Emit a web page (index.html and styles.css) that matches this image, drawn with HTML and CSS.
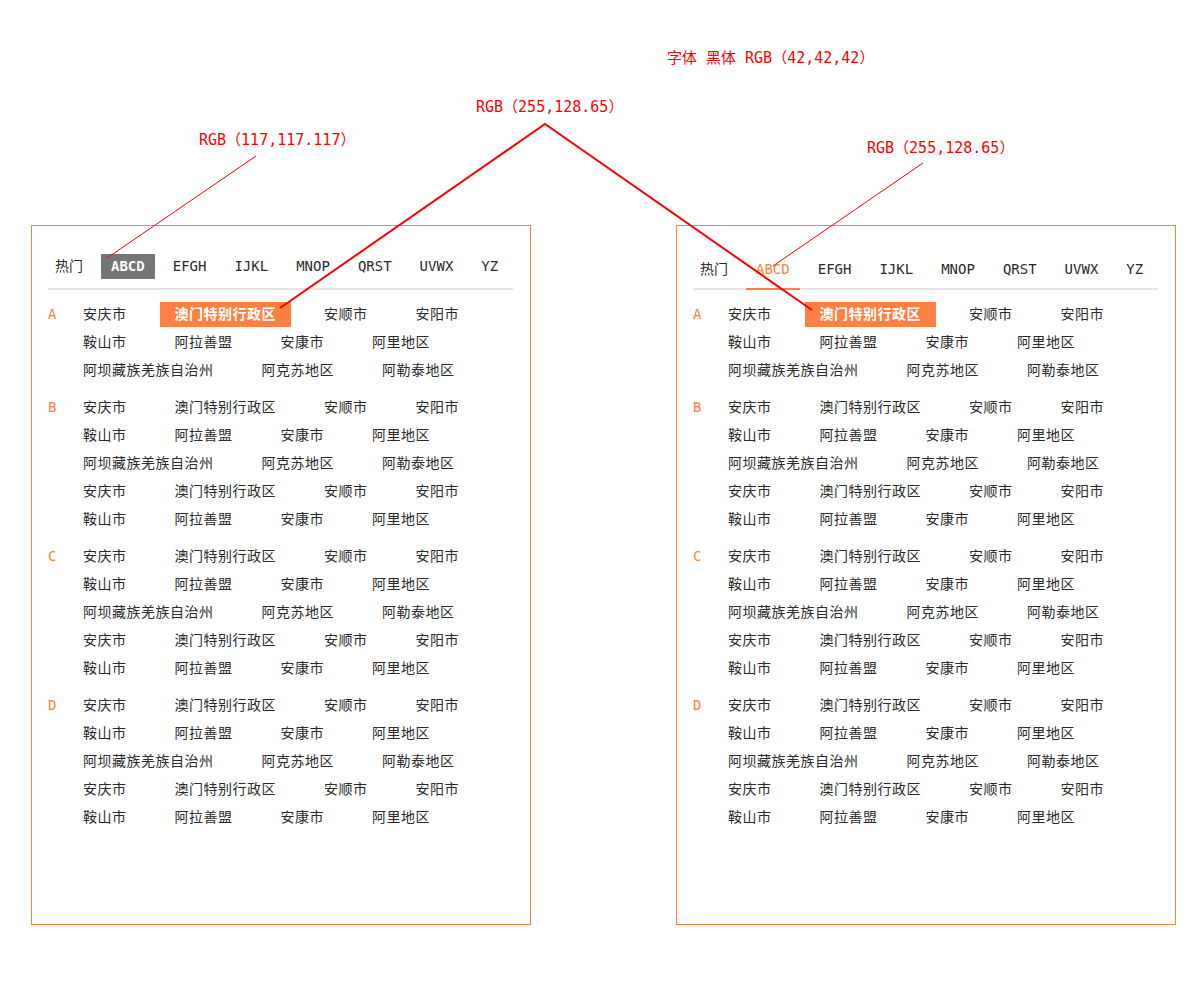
FILE: index.html
```html
<!DOCTYPE html>
<html lang="zh-CN">
<head>
    <meta charset="UTF-8">
    <title>城市选择</title>
    <link rel="stylesheet" href="styles.css">
</head>
<body>
    <div class="page">
        <!-- 样式一：灰底选中 -->
        <div class="panel">
            <div class="tabs">
                <span class="tab">热门</span>
                <span class="tab active">ABCD</span>
                <span class="tab">EFGH</span>
                <span class="tab">IJKL</span>
                <span class="tab">MNOP</span>
                <span class="tab">QRST</span>
                <span class="tab">UVWX</span>
                <span class="tab">YZ</span>
            </div>
            <div class="list">
                <div class="group">
                    <div class="letter">A</div>
                    <div class="rows">
                        <div class="row"><span class="city">安庆市</span><span class="city on">澳门特别行政区</span><span class="city">安顺市</span><span class="city">安阳市</span></div>
                        <div class="row"><span class="city">鞍山市</span><span class="city">阿拉善盟</span><span class="city">安康市</span><span class="city">阿里地区</span></div>
                        <div class="row"><span class="city">阿坝藏族羌族自治州</span><span class="city">阿克苏地区</span><span class="city">阿勒泰地区</span></div>
                    </div>
                </div>
                <div class="group">
                    <div class="letter">B</div>
                    <div class="rows">
                        <div class="row"><span class="city">安庆市</span><span class="city">澳门特别行政区</span><span class="city">安顺市</span><span class="city">安阳市</span></div>
                        <div class="row"><span class="city">鞍山市</span><span class="city">阿拉善盟</span><span class="city">安康市</span><span class="city">阿里地区</span></div>
                        <div class="row"><span class="city">阿坝藏族羌族自治州</span><span class="city">阿克苏地区</span><span class="city">阿勒泰地区</span></div>
                        <div class="row"><span class="city">安庆市</span><span class="city">澳门特别行政区</span><span class="city">安顺市</span><span class="city">安阳市</span></div>
                        <div class="row"><span class="city">鞍山市</span><span class="city">阿拉善盟</span><span class="city">安康市</span><span class="city">阿里地区</span></div>
                    </div>
                </div>
                <div class="group">
                    <div class="letter">C</div>
                    <div class="rows">
                        <div class="row"><span class="city">安庆市</span><span class="city">澳门特别行政区</span><span class="city">安顺市</span><span class="city">安阳市</span></div>
                        <div class="row"><span class="city">鞍山市</span><span class="city">阿拉善盟</span><span class="city">安康市</span><span class="city">阿里地区</span></div>
                        <div class="row"><span class="city">阿坝藏族羌族自治州</span><span class="city">阿克苏地区</span><span class="city">阿勒泰地区</span></div>
                        <div class="row"><span class="city">安庆市</span><span class="city">澳门特别行政区</span><span class="city">安顺市</span><span class="city">安阳市</span></div>
                        <div class="row"><span class="city">鞍山市</span><span class="city">阿拉善盟</span><span class="city">安康市</span><span class="city">阿里地区</span></div>
                    </div>
                </div>
                <div class="group">
                    <div class="letter">D</div>
                    <div class="rows">
                        <div class="row"><span class="city">安庆市</span><span class="city">澳门特别行政区</span><span class="city">安顺市</span><span class="city">安阳市</span></div>
                        <div class="row"><span class="city">鞍山市</span><span class="city">阿拉善盟</span><span class="city">安康市</span><span class="city">阿里地区</span></div>
                        <div class="row"><span class="city">阿坝藏族羌族自治州</span><span class="city">阿克苏地区</span><span class="city">阿勒泰地区</span></div>
                        <div class="row"><span class="city">安庆市</span><span class="city">澳门特别行政区</span><span class="city">安顺市</span><span class="city">安阳市</span></div>
                        <div class="row"><span class="city">鞍山市</span><span class="city">阿拉善盟</span><span class="city">安康市</span><span class="city">阿里地区</span></div>
                    </div>
                </div>
            </div>
        </div>

        <!-- 样式二：下划线选中 -->
        <div class="panel">
            <div class="tabs tabs-line">
                <span class="tab">热门</span>
                <span class="tab active">ABCD</span>
                <span class="tab">EFGH</span>
                <span class="tab">IJKL</span>
                <span class="tab">MNOP</span>
                <span class="tab">QRST</span>
                <span class="tab">UVWX</span>
                <span class="tab">YZ</span>
            </div>
            <div class="list">
                <div class="group">
                    <div class="letter">A</div>
                    <div class="rows">
                        <div class="row"><span class="city">安庆市</span><span class="city on">澳门特别行政区</span><span class="city">安顺市</span><span class="city">安阳市</span></div>
                        <div class="row"><span class="city">鞍山市</span><span class="city">阿拉善盟</span><span class="city">安康市</span><span class="city">阿里地区</span></div>
                        <div class="row"><span class="city">阿坝藏族羌族自治州</span><span class="city">阿克苏地区</span><span class="city">阿勒泰地区</span></div>
                    </div>
                </div>
                <div class="group">
                    <div class="letter">B</div>
                    <div class="rows">
                        <div class="row"><span class="city">安庆市</span><span class="city">澳门特别行政区</span><span class="city">安顺市</span><span class="city">安阳市</span></div>
                        <div class="row"><span class="city">鞍山市</span><span class="city">阿拉善盟</span><span class="city">安康市</span><span class="city">阿里地区</span></div>
                        <div class="row"><span class="city">阿坝藏族羌族自治州</span><span class="city">阿克苏地区</span><span class="city">阿勒泰地区</span></div>
                        <div class="row"><span class="city">安庆市</span><span class="city">澳门特别行政区</span><span class="city">安顺市</span><span class="city">安阳市</span></div>
                        <div class="row"><span class="city">鞍山市</span><span class="city">阿拉善盟</span><span class="city">安康市</span><span class="city">阿里地区</span></div>
                    </div>
                </div>
                <div class="group">
                    <div class="letter">C</div>
                    <div class="rows">
                        <div class="row"><span class="city">安庆市</span><span class="city">澳门特别行政区</span><span class="city">安顺市</span><span class="city">安阳市</span></div>
                        <div class="row"><span class="city">鞍山市</span><span class="city">阿拉善盟</span><span class="city">安康市</span><span class="city">阿里地区</span></div>
                        <div class="row"><span class="city">阿坝藏族羌族自治州</span><span class="city">阿克苏地区</span><span class="city">阿勒泰地区</span></div>
                        <div class="row"><span class="city">安庆市</span><span class="city">澳门特别行政区</span><span class="city">安顺市</span><span class="city">安阳市</span></div>
                        <div class="row"><span class="city">鞍山市</span><span class="city">阿拉善盟</span><span class="city">安康市</span><span class="city">阿里地区</span></div>
                    </div>
                </div>
                <div class="group">
                    <div class="letter">D</div>
                    <div class="rows">
                        <div class="row"><span class="city">安庆市</span><span class="city">澳门特别行政区</span><span class="city">安顺市</span><span class="city">安阳市</span></div>
                        <div class="row"><span class="city">鞍山市</span><span class="city">阿拉善盟</span><span class="city">安康市</span><span class="city">阿里地区</span></div>
                        <div class="row"><span class="city">阿坝藏族羌族自治州</span><span class="city">阿克苏地区</span><span class="city">阿勒泰地区</span></div>
                        <div class="row"><span class="city">安庆市</span><span class="city">澳门特别行政区</span><span class="city">安顺市</span><span class="city">安阳市</span></div>
                        <div class="row"><span class="city">鞍山市</span><span class="city">阿拉善盟</span><span class="city">安康市</span><span class="city">阿里地区</span></div>
                    </div>
                </div>
            </div>
        </div>
    </div>

    <!-- 标注层 -->
    <div class="notes">
        <svg class="note-lines" width="1200" height="1000" viewBox="0 0 1200 1000">
            <line x1="256" y1="156" x2="107" y2="258" stroke="#ff0000" stroke-width="1"/>
            <polyline points="280,308 545,124 812,310" fill="none" stroke="#ff0000" stroke-width="2"/>
            <line x1="923" y1="163" x2="773" y2="266" stroke="#ff0000" stroke-width="1"/>
        </svg>
        <span class="note note-font">字体 黑体 RGB<span class="po">（</span>42,42,42<span class="pc">）</span></span>
        <span class="note note-orange">RGB<span class="po">（</span>255,128.65<span class="pc">）</span></span>
        <span class="note note-gray">RGB<span class="po">（</span>117,117.117<span class="pc">）</span></span>
        <span class="note note-line">RGB<span class="po">（</span>255,128.65<span class="pc">）</span></span>
    </div>
</body>
</html>
```

FILE: styles.css
```css
body {
    margin: 0;
    padding: 0;
    background-color: #fff;
    font-family: "DejaVu Sans Mono", "Noto Sans CJK SC", monospace;
    font-size: 14px;
    color: #2a2a2a;
}

.page {
    display: flex;
    gap: 145px;
    padding: 225px 0 0 31px;
}

.panel {
    width: 500px;
    height: 700px;
    box-sizing: border-box;
    border: 1px solid #ff8041;
    padding: 28px 17px 0 16px;
}

.tabs {
    display: flex;
    gap: 8px;
    padding-bottom: 9px;
    border-bottom: 2px solid #e5e5e5;
}

.tab {
    height: 25px;
    line-height: 25px;
    padding: 0 10px;
    white-space: nowrap;
}

.tab:first-child {
    padding-left: 7px;
}

.tab.active {
    background-color: #757575;
    color: #fff;
    font-weight: bold;
}

.tabs-line {
    padding-bottom: 0;
}

.tabs-line .tab {
    padding-top: 3px;
    padding-bottom: 6px;
    border-bottom: 2px solid transparent;
    margin-bottom: -2px;
}

.tabs-line .tab.active {
    background-color: transparent;
    color: #ff8041;
    font-weight: normal;
    border-bottom-color: #ff8041;
}

.list {
    margin-top: 12px;
}

.group {
    display: flex;
    margin-bottom: 9px;
}

.letter {
    width: 20px;
    line-height: 25px;
    color: #ff8041;
}

.row {
    display: flex;
    gap: 18px;
    margin-bottom: 3px;
}

.city {
    height: 25px;
    line-height: 25px;
    padding: 0 15px;
    letter-spacing: 0.5px;
    white-space: nowrap;
}

.city.on {
    background-color: #ff8041;
    color: #fff;
    font-weight: bold;
}

.notes {
    position: absolute;
    top: 0;
    left: 0;
    width: 1200px;
    height: 1000px;
    pointer-events: none;
}

.note-lines {
    position: absolute;
    top: 0;
    left: 0;
}

.note {
    position: absolute;
    font-size: 15px;
    line-height: 18px;
    color: #ff0000;
    white-space: nowrap;
}

/* 全角括号占一个汉字宽 */
.note .po,
.note .pc {
    display: inline-block;
    width: 15px;
}

.note .po {
    text-align: right;
}

.note .pc {
    text-align: left;
}

.note-font {
    left: 667px;
    top: 49px;
}

.note-orange {
    left: 476px;
    top: 98px;
}

.note-gray {
    left: 199px;
    top: 131px;
}

.note-line {
    left: 867px;
    top: 139px;
}
```
